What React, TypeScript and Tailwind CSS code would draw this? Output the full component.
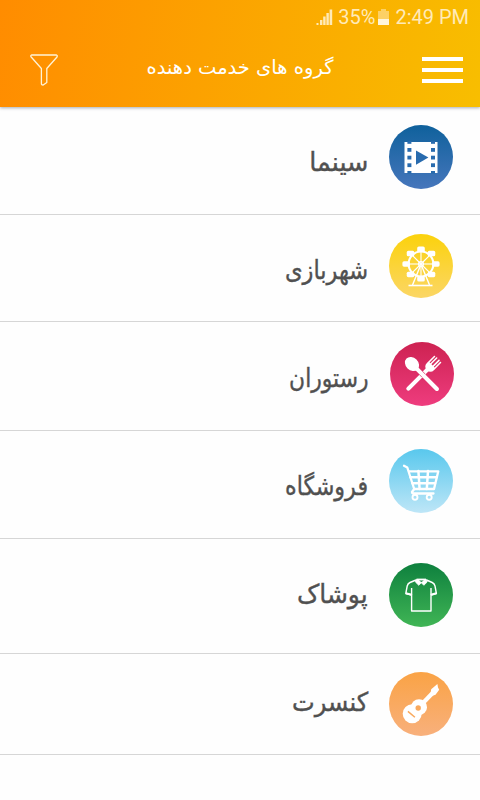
import type { ReactNode } from 'react'

interface Category {
  id: string
  label: string
  rowClass: string
  labelClass: string
  from: string
  to: string
  glyph: ReactNode
}

const CinemaGlyph = ({ hole }: { hole: string }) => (
  <>
    <rect x="15.5" y="17" width="33" height="31" fill="#fff" />
    {[18.4, 42].map((x) => (
      <g key={x} fill={hole}>
        <rect x={x} y="16" width="4" height="2.8" />
        <rect x={x} y="23" width="4" height="3.8" />
        <rect x={x} y="30.7" width="4" height="3.8" />
        <rect x={x} y="38.3" width="4" height="3.8" />
        <rect x={x} y="46" width="4" height="2.8" />
      </g>
    ))}
    <path d="M27 25.4 L39.4 32.5 L27 39.7 Z" fill={hole} />
  </>
)

const WheelGlyph = () => (
  <g stroke="#fff" fill="none">
    <circle cx="32" cy="30" r="12.4" strokeWidth="2" />
    <circle cx="32" cy="30" r="2.4" strokeWidth="1.3" />
    {[0, 45, 90, 135, 180, 225, 270, 315].map((a) => {
      const rad = (a * Math.PI) / 180
      const x = 32 + Math.cos(rad) * 14.8
      const y = 30 + Math.sin(rad) * 14.8
      return (
        <g key={a}>
          <line x1="32" y1="30" x2={x} y2={y} strokeWidth="1.1" />
          <rect x={x - 3.8} y={y - 2.7} width="7.6" height="5.4" rx="1.6" fill="#fff" stroke="none" />
        </g>
      )
    })}
    <path d="M31.5 31.5 L23.5 51 M32.5 31.5 L40.5 51" strokeWidth="1.4" />
    <path d="M19.5 51.5 H43.5" strokeWidth="1.6" />
  </g>
)

const CutleryGlyph = ({ gap }: { gap: string }) => (
  <>
    <g transform="rotate(45 41 24)">
      <path d="M41 27 V56" stroke="#fff" strokeWidth="4.2" strokeLinecap="round" />
      <path
        d="M36 14.5 Q36.7 13.5 37.5 14.5 V22.5 H38.6 V14 Q39.3 13 40.1 14 V22.5 H41.9 V14 Q42.7 13 43.4 14 V22.5 H44.5 V14.5 Q45.3 13.5 46 14.5 V24.5 Q46 29.5 41 30 Q36 29.5 36 24.5 Z"
        fill="#fff"
      />
    </g>
    <path d="M28.5 28.5 L33.5 33.5" stroke={gap} strokeWidth="5.2" />
    <g transform="rotate(-45 22.5 22.5)">
      <ellipse cx="22.5" cy="21.8" rx="6.3" ry="7.8" fill="#fff" />
      <path d="M22.5 28 V57" stroke="#fff" strokeWidth="4.2" strokeLinecap="round" />
    </g>
  </>
)

const CartGlyph = () => (
  <g stroke="#fff" fill="none" strokeLinecap="round" strokeLinejoin="round">
    <path d="M15 16.7 L18.3 18.5 L25.2 40 L23 43 Q23 44.5 25 44.5 H44.5" strokeWidth="2.3" />
    <path d="M20 22.3 H49.3 L45 40 H25.2" strokeWidth="2.3" />
    <path d="M21.5 28.2 H47.5 M23.5 34.2 H46" strokeWidth="2.6" />
    <path d="M29.4 22 L30.6 40 M39 22 L37.8 40" strokeWidth="2.5" />
    <circle cx="26" cy="48.2" r="2.5" strokeWidth="1.9" />
    <circle cx="40.2" cy="48.2" r="2.5" strokeWidth="1.9" />
  </g>
)

const ShirtGlyph = () => (
  <g stroke="#fff" fill="none" strokeLinejoin="round">
    <path
      d="M27 17 L21 19.5 Q18.8 20.5 18.2 23 L16.8 30.5 L22.6 32 V48 H42 V32 L47.4 30.5 L46 23 Q45.4 20.5 43.2 19.5 L37.5 17"
      strokeWidth="1.4"
    />
    <path d="M22.6 32 V25 M42 32 V25" strokeWidth="1.4" />
    <path d="M16.8 30.3 L22.6 31.8 M47.4 30.3 L42 31.8" strokeWidth="2.1" />
    <path d="M27.5 16 H37 L38.2 19 L34.8 22.3 L32.3 19.8 L29.8 22.3 L26.4 19 Z" fill="#fff" strokeWidth="0.8" />
    <path d="M30 17.4 H34.8 L32.4 19.1 Z" fill="#148540" stroke="none" />
  </g>
)

const GuitarGlyph = ({ hole }: { hole: string }) => (
  <>
    <circle cx="23.2" cy="41.8" r="9.5" fill="#fff" />
    <circle cx="30" cy="35.2" r="8" fill="#fff" />
    <path d="M33 32 L46 18.5" stroke="#fff" strokeWidth="4.2" />
    <path d="M41.6 21.5 L42.2 17.3 L48.4 12 L49 15.6 L50.2 17.8 L46.5 22.7 L43.5 23.7 Z" fill="#fff" />
    <circle cx="29.2" cy="36" r="2.7" fill={hole} />
    <path d="M18.9 39.4 L25.9 45.3" stroke={hole} strokeWidth="1.5" />
  </>
)

const categories: Category[] = [
  {
    id: 'cinema',
    label: 'سینما',
    rowClass: 'h-[108px] gap-[21px] pt-[18px] pr-[27px]',
    labelClass: 'mt-[5px] scale-x-[0.98]',
    from: '#0f619c',
    to: '#4676bc',
    glyph: <CinemaGlyph hole="#286bae" />,
  },
  {
    id: 'park',
    label: 'شهربازی',
    rowClass: 'h-[107px] gap-[21px] pt-[19px] pr-[27px]',
    labelClass: 'mt-[4px] scale-x-[0.865]',
    from: '#fbd20c',
    to: '#fbd665',
    glyph: <WheelGlyph />,
  },
  {
    id: 'restaurant',
    label: 'رستوران',
    rowClass: 'h-[109px] gap-[22px] pt-[20px] pr-[26px]',
    labelClass: 'mt-[4px] scale-x-[0.84]',
    from: '#cd2251',
    to: '#ee3c7e',
    glyph: <CutleryGlyph gap="#dc2d65" />,
  },
  {
    id: 'store',
    label: 'فروشگاه',
    rowClass: 'h-[108px] gap-[21px] pt-[18px] pr-[27px]',
    labelClass: 'mt-[5px] scale-x-[0.856]',
    from: '#59c8ed',
    to: '#bee6f7',
    glyph: <CartGlyph />,
  },
  {
    id: 'clothes',
    label: 'پوشاک',
    rowClass: 'h-[115px] gap-[21px] pt-[24px] pr-[27px]',
    labelClass: '-mt-[1px] scale-x-[0.96]',
    from: '#0e803e',
    to: '#40b555',
    glyph: <ShirtGlyph />,
  },
  {
    id: 'concert',
    label: 'کنسرت',
    rowClass: 'h-[101px] gap-[21px] pt-[18px] pr-[27px]',
    labelClass: '-mt-[2px] scale-x-[0.927]',
    from: '#faa345',
    to: '#f8b07c',
    glyph: <GuitarGlyph hole="#f9a85c" />,
  },
]

function StatusBar() {
  return (
    <div className="flex h-[34px] items-center justify-end pr-[11px] font-['Roboto',sans-serif] text-[20px] text-[#ffeab8]">
      <svg width="17" height="16" viewBox="0 0 17 16" className="mr-[5px]" fill="currentColor">
        <rect x="0.5" y="14" width="2" height="2" />
        <rect x="4" y="11" width="2.4" height="5" />
        <rect x="7.2" y="7.5" width="2.4" height="8.5" />
        <rect x="10.4" y="4" width="2.4" height="12" />
        <rect x="13.6" y="0.5" width="2.6" height="15.5" />
      </svg>
      <span>35%</span>
      <svg width="11" height="16" viewBox="0 0 11 16" className="mr-[6px] ml-[3px]" fill="currentColor">
        <path d="M3 0 H8 V2 H11 V16 H0 V2 H3 Z" opacity="0.55" />
        <rect y="10" width="11" height="6" fill="#fff5da" />
      </svg>
      <span>2:49 PM</span>
    </div>
  )
}

function Header() {
  return (
    <header className="relative z-10 h-[107px] bg-linear-[100deg,#ff8c00,#f8be00] shadow-[0_1px_3px_rgba(60,70,90,0.45)]">
      <StatusBar />
      <div className="flex h-[72px] items-center justify-between pr-[17px] pl-[30px]">
        <button aria-label="filter">
          <svg width="28" height="32" viewBox="0 0 28 32" fill="none" stroke="#fff3d6" strokeWidth="1.3" strokeLinejoin="round">
            <path d="M1.5 1 H26.5 Q27.8 1.6 27 3 L16.8 14.5 V28.5 L13.2 31 Q11.4 31.2 11.4 29.5 V14.5 L1.2 3 Q0.2 1.6 1.5 1 Z" />
          </svg>
        </button>
        <h1
          dir="rtl"
          className="mb-[5px] font-['DejaVu_Sans',sans-serif] text-[19.5px] leading-none whitespace-nowrap text-white"
        >
          گروه های خدمت دهنده
        </h1>
        <button aria-label="menu" className="flex flex-col gap-[7px]">
          <span className="h-[4px] w-[41px] bg-white" />
          <span className="h-[4px] w-[41px] bg-white" />
          <span className="h-[4px] w-[41px] bg-white" />
        </button>
      </div>
    </header>
  )
}

function CategoryRow({ category }: { category: Category }) {
  return (
    <li className={`flex items-start border-b border-[#d6d6d6] ${category.rowClass}`}>
      <svg width="64" height="64" viewBox="0 0 64 64" className="shrink-0">
        <defs>
          <linearGradient id={category.id} x1="0" y1="0" x2="0" y2="1">
            <stop offset="0" stopColor={category.from} />
            <stop offset="1" stopColor={category.to} />
          </linearGradient>
        </defs>
        <circle cx="32" cy="32" r="32" fill={`url(#${category.id})`} />
        {category.glyph}
      </svg>
      <span
        className={`flex h-[64px] origin-right items-center text-[26px] whitespace-nowrap text-[#505050] [-webkit-text-stroke:0.4px_#505050] ${category.labelClass}`}
      >
        {category.label}
      </span>
    </li>
  )
}

export default function App() {
  return (
    <div className="h-[800px] w-[480px] overflow-hidden bg-[#fefefe]">
      <Header />
      <ul dir="rtl" className="font-['DejaVu_Sans',sans-serif]">
        {categories.map((category) => (
          <CategoryRow key={category.id} category={category} />
        ))}
      </ul>
    </div>
  )
}
